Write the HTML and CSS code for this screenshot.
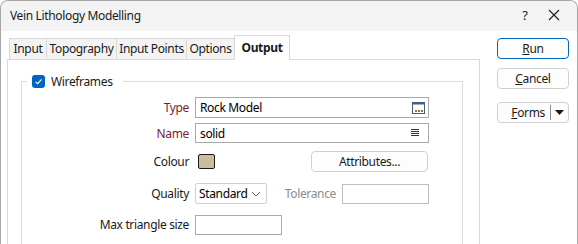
FILE: index.html
```html
<!DOCTYPE html>
<html lang="en">
<head>
<meta charset="utf-8">
<title>Vein Lithology Modelling</title>
<link rel="stylesheet" href="styles.css">
</head>
<body>
<div class="window">
  <header class="titlebar">
    <span class="title">Vein Lithology Modelling</span>
    <div class="caption">
      <span class="help">?</span>
      <svg class="close" width="12" height="12" viewBox="0 0 12 12"><path d="M1 1 L11 11 M11 1 L1 11" stroke="#1a1a1a" stroke-width="1.1" fill="none"/></svg>
    </div>
  </header>
  <div class="main">
    <div class="left">
      <div class="tabs">
        <div class="tab t-input">Input</div>
        <div class="tab t-topo">Topography</div>
        <div class="tab t-points">Input Points</div>
        <div class="tab t-options">Options</div>
        <div class="tab t-output active">Output</div>
      </div>
      <div class="panel">
        <fieldset class="group">
          <legend class="legend">
            <span class="check"><svg width="13" height="13" viewBox="0 0 13 13"><path d="M3.6 6.8 L5.6 8.7 L9.6 4.4" stroke="#fff" stroke-width="1.1" fill="none"/></svg></span>
            <span>Wireframes</span>
          </legend>
          <div class="row r-type">
            <span class="lbl req">Type</span>
            <div class="field wide">
              <span class="val">Rock Model</span>
              <svg class="ico" width="13" height="12" viewBox="0 0 13 12"><rect x="0.5" y="0.5" width="12" height="11" fill="#fff" stroke="#44607f"/><rect x="0.5" y="0.5" width="12" height="2" fill="#44607f"/><rect x="3" y="8" width="2" height="2" fill="#9a7536"/><rect x="6" y="8" width="2" height="2" fill="#9a7536"/><rect x="9" y="8" width="2" height="2" fill="#9a7536"/></svg>
            </div>
          </div>
          <div class="row r-name">
            <span class="lbl req">Name</span>
            <div class="field wide">
              <span class="val">solid</span>
              <svg class="ico list" width="8" height="8" viewBox="0 0 8 8"><path d="M0 0.5H8M0 2.5H8M0 4.5H8M0 6.5H8" stroke="#333" stroke-width="1"/></svg>
            </div>
          </div>
          <div class="row r-colour">
            <span class="lbl">Colour</span>
            <span class="swatch"></span>
            <button class="btn attr">Attributes...</button>
          </div>
          <div class="row r-quality">
            <span class="lbl">Quality</span>
            <div class="select">
              <span class="val">Standard</span>
              <svg width="10" height="6" viewBox="0 0 10 6"><path d="M1 1 L5 5 L9 1" stroke="#666" stroke-width="1" fill="none"/></svg>
            </div>
            <span class="lbl-dis">Tolerance</span>
            <div class="field short dis"></div>
          </div>
          <div class="row r-max">
            <span class="lbl">Max triangle size</span>
            <div class="field short"></div>
          </div>
        </fieldset>
      </div>
    </div>
    <div class="side">
      <button class="btn sbtn default"><u>R</u>un</button>
      <button class="btn sbtn"><u>C</u>ancel</button>
      <div class="btn sbtn forms">
        <span class="forms-lbl"><u>F</u>orms</span>
        <span class="sep"></span>
        <svg width="9" height="5" viewBox="0 0 9 5"><path d="M0 0 H9 L4.5 5 Z" fill="#1a1a1a"/></svg>
      </div>
    </div>
  </div>
</div>
</body>
</html>
```
FILE: styles.css
```css
* { box-sizing: border-box; }
html, body { margin: 0; padding: 0; background: #fff; overflow: hidden; }
body {
  font-family: "Noto Sans", "Open Sans", sans-serif;
  font-size: 12px;
  letter-spacing: -0.35px;
  color: #000;
}
.window {
  width: 578px;
  height: 260px;
  border: 1px solid #a6a6a6;
  border-bottom: none;
  border-radius: 8px 8px 0 0;
  overflow: hidden;
  background: #fff;
}
.titlebar {
  height: 30px;
  background: #f3f3f3;
  display: flex;
  align-items: center;
  justify-content: space-between;
  padding-left: 9px;
}
.title { color: #1a1a1a; padding-bottom: 1px; }
.caption { display: flex; align-items: center; height: 100%; }
.help { font-size: 13px; width: 46px; text-align: center; color: #1a1a1a; padding-bottom: 2px; }
.close { margin: 0 17px 2px 0; }
.main { display: flex; padding-top: 5px; }
.left { width: 479px; }
.tabs { display: flex; align-items: flex-end; height: 23px; padding-left: 8px; position: relative; z-index: 1; }
.tab {
  height: 21px;
  background: #f3f3f3;
  border: 1px solid #d9d9d9;
  border-bottom: none;
  border-right: none;
  display: flex; align-items: center; justify-content: center;
  padding-bottom: 1px;
  color: #1a1a1a;
}
.t-input { width: 37px; }
.t-topo { width: 70px; }
.t-points { width: 70px; }
.t-options { width: 48px; }
.tab.active {
  width: 56px;
  height: 25px;
  margin-bottom: -1px;
  background: #fff;
  border-right: 1px solid #d9d9d9;
  font-weight: bold;
  padding-bottom: 2px;
}
.panel {
  margin-left: 6px;
  height: 200px;
  border: 1px solid #d9d9d9;
  border-bottom: none;
}
.group {
  margin: 14px 0 0 13px;
  width: 442px;
  height: 180px;
  border: 1px solid #dcdcdc;
  border-bottom: none;
  padding: 0;
}
.legend {
  margin-left: 5px;
  padding: 0 10px 0 5px;
  display: flex; align-items: center; gap: 6px;
  height: 14px;
  color: #1a1a1a;
}
.check {
  width: 13px; height: 13px;
  background: #0067c0;
  border-radius: 3px;
  display: flex;
}
.row { display: flex; align-items: center; width: 407px; }
.lbl { width: 167px; text-align: right; margin-right: 6px; color: #1a1a1a; flex: none; }
.lbl.req { color: #7b1832; }
.r-type { margin-top: 9px; height: 21px; }
.r-name { margin-top: 5px; height: 20px; }
.r-colour { margin-top: 8px; height: 21px; }
.r-quality { margin-top: 11px; height: 21px; }
.r-max { margin-top: 10px; height: 21px; }
.field {
  height: 20px;
  border: 1px solid #a9a9a9;
  background: #fff;
  display: flex; align-items: center; justify-content: space-between;
  padding: 0 3px 0 4px;
  flex: none;
}
.r-type .field { height: 21px; }
.wide { width: 234px; }
.short { width: 87px; }
.field.dis { border-color: #bdbdbd; }
.ico.list { margin-right: 6px; }
.swatch {
  width: 17px; height: 15px;
  margin-left: 3px;
  background: #cbbd9b;
  border: 1px solid #1a1a1a;
  border-radius: 2px;
}
.btn {
  font-family: inherit;
  font-size: 12px;
  letter-spacing: inherit;
  color: #1a1a1a;
  background: #fdfdfd;
  border: 1px solid #d0d0d0;
  border-radius: 4px;
  padding: 0;
  height: 21px;
}
.attr { width: 117px; margin-left: auto; margin-right: 1px; }
.select {
  width: 72px; height: 21px;
  border: 1px solid #d0d0d0;
  border-radius: 2px;
  display: flex; align-items: center; justify-content: space-between;
  padding: 0 5px 0 3px;
}
.lbl-dis { color: #8c8c8c; margin-left: auto; margin-right: 6px; }
.side { display: flex; flex-direction: column; padding: 2px 0 0 17px; }
.sbtn { width: 72px; height: 21px; margin-bottom: 9px; }
.sbtn.default { border-color: #0067c0; }
.sbtn + .sbtn + .sbtn { margin-top: 4px; }
.forms { display: flex; align-items: center; justify-content: flex-end; padding-right: 4px; }
.forms-lbl { margin-right: 5px; }
.sep { width: 1px; height: 15px; background: #8a8a8a; margin-right: 4px; }
```
